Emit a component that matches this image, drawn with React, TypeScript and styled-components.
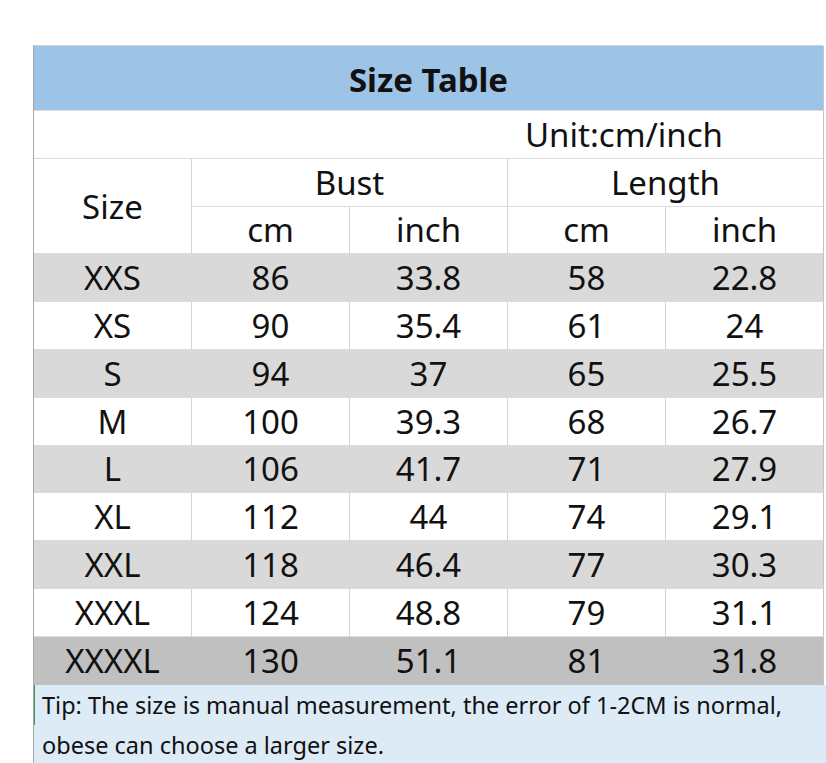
import React from 'react'
import styled, { createGlobalStyle } from 'styled-components'

type Shade = 'none' | 'light' | 'dark'

const rows: [string, string, string, string, string][] = [
  ['XXS', '86', '33.8', '58', '22.8'],
  ['XS', '90', '35.4', '61', '24'],
  ['S', '94', '37', '65', '25.5'],
  ['M', '100', '39.3', '68', '26.7'],
  ['L', '106', '41.7', '71', '27.9'],
  ['XL', '112', '44', '74', '29.1'],
  ['XXL', '118', '46.4', '77', '30.3'],
  ['XXXL', '124', '48.8', '79', '31.1'],
  ['XXXXL', '130', '51.1', '81', '31.8'],
]

const shadeFor = (i: number): Shade => {
  if (i === rows.length - 1) return 'dark'
  return i % 2 === 0 ? 'light' : 'none'
}

const App: React.FC = () => {
  return (
    <Page>
      <GlobalStyle />
      <Sheet>
        <Title>Size Table</Title>
        <UnitBlank />
        <Unit>Unit:cm/inch</Unit>
        <SizeHead>Size</SizeHead>
        <GroupHead $col={2}>Bust</GroupHead>
        <GroupHead $col={4}>Length</GroupHead>
        <Cell>cm</Cell>
        <Cell>inch</Cell>
        <Cell>cm</Cell>
        <Cell $last>inch</Cell>
        {rows.map((r, i) =>
          r.map((v, j) => (
            <Cell key={`${i}-${j}`} $shade={shadeFor(i)} $last={j === 4}>
              {v}
            </Cell>
          ))
        )}
      </Sheet>
      <Tip>
        <TipLine $marked>
          Tip: The size is manual measurement, the error of 1-2CM is normal,
        </TipLine>
        <TipLine>obese can choose a larger size.</TipLine>
      </Tip>
    </Page>
  )
}

export default App

const GlobalStyle = createGlobalStyle`
  html, body {
    margin: 0;
    padding: 0;
    background: #ffffff;
  }
  * {
    box-sizing: border-box;
  }
`
const Page = styled.div`
  width: 826px;
  height: 763px;
  overflow: hidden;
  padding: 45px 0 0 33px;
  font-family: "Noto Sans", "Open Sans", sans-serif;
  color: #111;
`
const Sheet = styled.div`
  display: grid;
  width: 790px;
  grid-template-columns: repeat(5, 158px);
  grid-template-rows: 65px repeat(12, 47.8px);
  border-top: 1px solid #cfcfcf;
  border-left: 1px solid #a8a8a8;
  font-size: 33px;
`
const Cell = styled.div<{ $shade?: Shade; $last?: boolean }>`
  display: flex;
  align-items: center;
  justify-content: center;
  line-height: 1;
  background: ${(p) =>
    p.$shade === 'dark' ? '#c0c0c0' : p.$shade === 'light' ? '#d9d9d9' : '#ffffff'};
  border-bottom: 1px solid
    ${(p) => (p.$shade === 'dark' ? '#c0c0c0' : '#dcdcdc')};
  border-right: 1px solid
    ${(p) =>
      p.$last ? '#c4c4c4' : p.$shade === 'dark' ? '#c0c0c0' : p.$shade === 'light' ? '#d9d9d9' : '#d4d4d4'};
`
const Title = styled(Cell)`
  grid-column: 1 / 6;
  background: #9dc3e6;
  border-bottom: 1px solid #dcdcdc;
  border-right: 1px solid #c4c4c4;
  font-weight: 700;
  padding-top: 2px;
`
const UnitBlank = styled(Cell)`
  grid-column: 1 / 4;
  border-right: none;
`
const Unit = styled(Cell)`
  grid-column: 4 / 6;
  justify-content: flex-start;
  padding-left: 17px;
  border-right-color: #c4c4c4;
`
const SizeHead = styled(Cell)`
  grid-row: 3 / 5;
  grid-column: 1;
`
const GroupHead = styled(Cell)<{ $col: number }>`
  grid-column: ${(p) => `${p.$col} / ${p.$col + 2}`};
  border-right-color: ${(p) => (p.$col === 4 ? '#c4c4c4' : '#d4d4d4')};
`
const Tip = styled.div`
  width: 793px;
  background: #ddebf7;
  border-left: 1px solid #a8a8a8;
  font-size: 23.5px;
`
const TipLine = styled.div<{ $marked?: boolean }>`
  height: 40px;
  line-height: 40px;
  padding-left: 8px;
  white-space: nowrap;
  box-shadow: ${(p) => (p.$marked ? 'inset 1px 0 0 #3c9a4c' : 'none')};
`
